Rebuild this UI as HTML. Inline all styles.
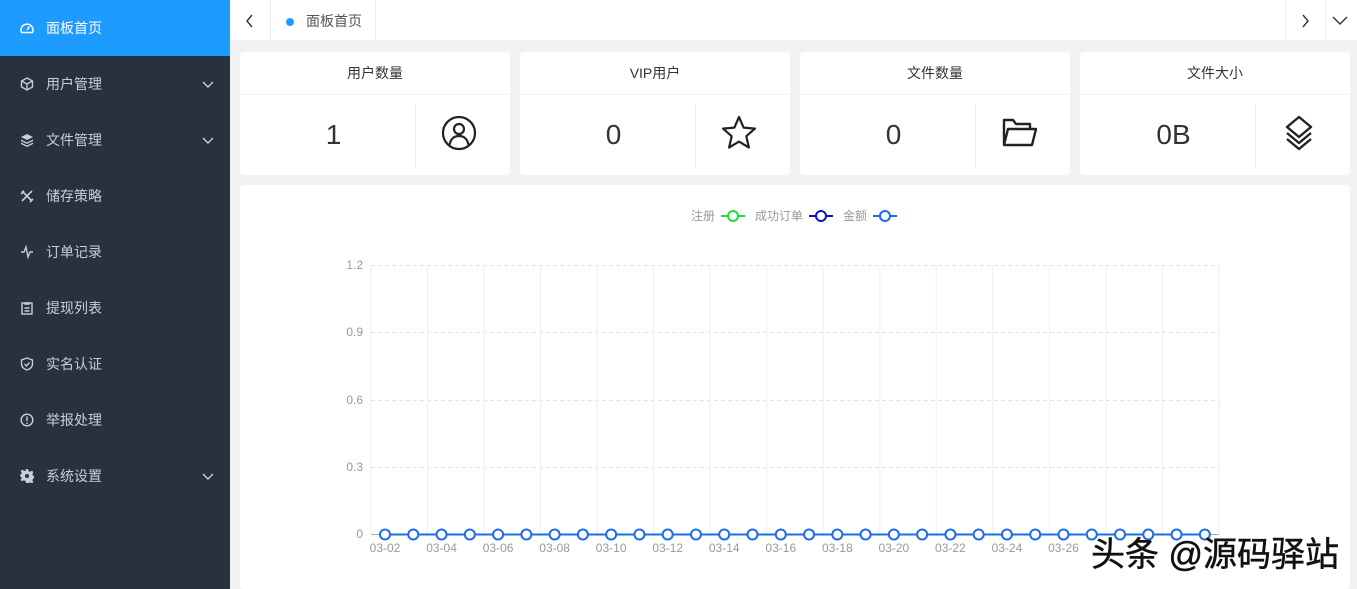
<!DOCTYPE html><html><head><meta charset="utf-8"><style>
*{box-sizing:border-box;margin:0;padding:0}
body{width:1357px;height:589px;overflow:hidden;background:#f2f2f2;font-family:"Liberation Sans","Noto Sans CJK SC",sans-serif;position:relative}
.side{position:absolute;left:0;top:0;width:230px;height:589px;background:#28323e}
.it{position:absolute;left:0;width:230px;height:56px;color:#c9ced4;font-size:14px;line-height:56px;padding-left:46px}
.it.on{background:#1e9bff;color:#fff}
.it svg.ic{position:absolute;left:20px;top:21px}
.it .ch{position:absolute;right:16px;top:22px}
.tabs{position:absolute;left:230px;top:0;width:1127px;height:41px;background:#fff;border-bottom:1px solid #eee}
.card{position:absolute;top:52px;width:270px;height:123px;background:#fff;border-radius:4px}
.card .h{height:43px;border-bottom:1px solid #f0f0f0;text-align:center;line-height:43px;font-size:14px;color:#333}
.card .n{position:absolute;left:0;width:187px;top:67px;text-align:center;font-size:28px;color:#333}
.card .d{position:absolute;left:175px;top:52px;height:64px;border-left:1px solid #eee}
.card svg{position:absolute;left:201px;top:63px}
.chart{position:absolute;left:240px;top:185px;width:1110px;height:404px;background:#fff;border-radius:4px}
</style></head><body>
<div class="side">
<div class="it on" style="top:0"><svg class="ic" width="14" height="14" viewBox="0 0 14 14" fill="none" stroke="#fff" stroke-width="1.5"><path d="M1.5 11.5A6 6 0 1 1 12.5 11.5Z"/><path d="M7 9L9.5 5.5"/></svg>面板首页</div>
<div class="it" style="top:56px"><svg class="ic" width="14" height="14" viewBox="0 0 14 14" fill="none" stroke="#c9ced4" stroke-width="1.4"><path d="M7 1L12.5 4v6L7 13 1.5 10V4z M1.5 4L7 7l5.5-3 M7 7v6"/></svg>用户管理<svg class="ch" width="12" height="12" viewBox="0 0 12 12" fill="none" stroke="#c9ced4" stroke-width="1.4"><path d="M1 4l5 5 5-5"/></svg></div>
<div class="it" style="top:112px"><svg class="ic" width="14" height="14" viewBox="0 0 14 14" fill="#c9ced4"><path d="M7 1l6 3-6 3-6-3z M1 6.5l6 3 6-3v1.5l-6 3-6-3z M1 9.5l6 3 6-3V11l-6 3-6-3z"/></svg>文件管理<svg class="ch" width="12" height="12" viewBox="0 0 12 12" fill="none" stroke="#c9ced4" stroke-width="1.4"><path d="M1 4l5 5 5-5"/></svg></div>
<div class="it" style="top:168px"><svg class="ic" width="14" height="14" viewBox="0 0 14 14" fill="none" stroke="#c9ced4" stroke-width="1.6"><path d="M2 2l10 10 M12 2L2 12 M1 5l3-3 M10 13l3-3"/></svg>储存策略</div>
<div class="it" style="top:224px"><svg class="ic" width="14" height="14" viewBox="0 0 14 14" fill="none" stroke="#c9ced4" stroke-width="1.4"><path d="M1 7h3l2-5 2 10 2-5h3"/></svg>订单记录</div>
<div class="it" style="top:280px"><svg class="ic" width="14" height="14" viewBox="0 0 14 14" fill="none" stroke="#c9ced4" stroke-width="1.4"><rect x="2" y="2" width="10" height="11"/><path d="M5 1v2h4V1 M4.5 7h5 M4.5 10h5"/></svg>提现列表</div>
<div class="it" style="top:336px"><svg class="ic" width="14" height="14" viewBox="0 0 14 14" fill="none" stroke="#c9ced4" stroke-width="1.4"><path d="M7 1l5.5 2v4c0 3-2.5 5-5.5 6C4 12 1.5 10 1.5 7V3z M4.5 7l2 2 3-3.5"/></svg>实名认证</div>
<div class="it" style="top:392px"><svg class="ic" width="14" height="14" viewBox="0 0 14 14" fill="none" stroke="#c9ced4" stroke-width="1.4"><circle cx="7" cy="7" r="5.8"/><path d="M7 3.5v4.5 M7 9.5v1.5"/></svg>举报处理</div>
<div class="it" style="top:448px"><svg class="ic" width="14" height="14" viewBox="0 0 14 14" fill="#c9ced4"><path d="M6 0h2l.5 2 1.7.8 1.8-1.1 1.4 1.4-1.1 1.8.8 1.7 2 .5v2l-2 .5-.8 1.7 1.1 1.8-1.4 1.4-1.8-1.1-1.7.8L8 14H6l-.5-2-1.7-.8-1.8 1.1-1.4-1.4 1.1-1.8-.8-1.7L-1 8V6l2-.5.8-1.7L.7 2l1.4-1.4 1.8 1.1L5.5 2z"/><circle cx="7" cy="7" r="2" fill="#28323e"/></svg>系统设置<svg class="ch" width="12" height="12" viewBox="0 0 12 12" fill="none" stroke="#c9ced4" stroke-width="1.4"><path d="M1 4l5 5 5-5"/></svg></div>
</div>
<div class="tabs">
<svg style="position:absolute;left:15px;top:14px" width="10" height="14" viewBox="0 0 10 14" fill="none" stroke="#333" stroke-width="1.4"><path d="M7 1L2 7l5 6"/></svg>
<div style="position:absolute;left:40px;top:0;height:41px;border-left:1px solid #eee"></div>
<div style="position:absolute;left:56px;top:18px;width:8px;height:8px;border-radius:50%;background:#1e9bff"></div>
<div style="position:absolute;left:76px;top:1px;line-height:41px;font-size:14px;color:#555">面板首页</div>
<div style="position:absolute;left:145px;top:0;height:41px;border-left:1px solid #eee"></div>
<div style="position:absolute;left:1055px;top:0;height:41px;border-left:1px solid #eee"></div>
<svg style="position:absolute;left:1070px;top:14px" width="10" height="14" viewBox="0 0 10 14" fill="none" stroke="#333" stroke-width="1.4"><path d="M3 1l5 6-5 6"/></svg>
<div style="position:absolute;left:1095px;top:0;height:41px;border-left:1px solid #eee"></div>
<svg style="position:absolute;left:1102px;top:14px" width="16" height="12" viewBox="0 0 16 12" fill="none" stroke="#333" stroke-width="1.4"><path d="M1 3l7 7 7-7"/></svg>
</div>
<div class="card" style="left:240px"><div class="h">用户数量</div><div class="n">1</div><div class="d"></div><svg width="36" height="36" viewBox="0 0 36 36" fill="none" stroke="#222" stroke-width="2.2"><circle cx="18" cy="18" r="16"/><circle cx="18" cy="14" r="5"/><path d="M8.5 30c1-6 4.5-9 9.5-9s8.5 3 9.5 9"/></svg></div>
<div class="card" style="left:520px"><div class="h">VIP用户</div><div class="n">0</div><div class="d"></div><svg width="36" height="36" viewBox="0 0 36 36" fill="none" stroke="#222" stroke-width="2.2" stroke-linejoin="round"><path d="M18 2l4.6 10.6 11.4 1-8.7 7.6 2.6 11.3L18 26.6 8.1 32.5l2.6-11.3L2 13.6l11.4-1z"/></svg></div>
<div class="card" style="left:800px"><div class="h">文件数量</div><div class="n">0</div><div class="d"></div><svg width="36" height="36" viewBox="0 0 36 36" fill="none" stroke="#222" stroke-width="2.4" stroke-linejoin="round"><path d="M3 30V5h9l3 4h14v5 M3 30l4-16h28l-4 16z"/></svg></div>
<div class="card" style="left:1080px"><div class="h">文件大小</div><div class="n">0B</div><div class="d"></div><svg width="36" height="36" viewBox="0 0 36 36" fill="none" stroke="#222" stroke-width="2.4" stroke-linejoin="round"><path d="M18 2l12 10-12 10L6 12z M6 18l12 10 12-10 M6 24l12 10 12-10"/></svg></div>
<div class="chart"></div>
<svg style="position:absolute;left:0;top:0" width="1357" height="589" font-family="Liberation Sans,Noto Sans CJK SC,sans-serif">
<g font-size="12" fill="#999">
<text x="691" y="220">注册</text><text x="755" y="220">成功订单</text><text x="843" y="220">金额</text></g>
<g fill="#fff" stroke-width="2"><path d="M721 216h24" stroke="#1fe03a"/><circle cx="733" cy="216" r="5" stroke="#1fe03a"/>
<path d="M809 216h24" stroke="#0d16b8"/><circle cx="821" cy="216" r="5" stroke="#0d16b8"/>
<path d="M873 216h24" stroke="#1a6ee6"/><circle cx="885" cy="216" r="5" stroke="#1a6ee6"/></g>
<g stroke="#e3e3e3" stroke-dasharray="4 3"><path d="M371 265.5H1219M371 332.5H1219M371 400.5H1219M371 467.5H1219"/></g>
<g stroke="#eee" id="vg"></g>
<g font-size="12" fill="#999" text-anchor="end"><text x="363" y="269">1.2</text><text x="363" y="336">0.9</text><text x="363" y="404">0.6</text><text x="363" y="471">0.3</text><text x="363" y="538">0</text></g>
<path d="M371 534.5H1219" stroke="#aaa"/>
<path d="M385 534.5H1205" stroke="#1a6ee6" stroke-width="2"/>
<g id="pts" fill="#fff" stroke="#1a6ee6" stroke-width="2"></g>
<g id="xl" font-size="12" fill="#999" text-anchor="middle"></g>
<text x="1091" y="566" font-size="34" fill="#111" stroke="#111" stroke-width="0.5" textLength="248" lengthAdjust="spacingAndGlyphs">头条 @源码驿站</text>
</svg>
<script>
var ns="http://www.w3.org/2000/svg",vg=document.getElementById("vg"),p=document.getElementById("pts"),xl=document.getElementById("xl");
for(var k=0;k<=15;k++){var x=371+k*56.53,l=document.createElementNS(ns,"path");l.setAttribute("d","M"+x.toFixed(1)+" 265V534");vg.appendChild(l);}
for(var i=0;i<30;i++){var x=385+i*28.27,c=document.createElementNS(ns,"circle");c.setAttribute("cx",x);c.setAttribute("cy",534.5);c.setAttribute("r",5);p.appendChild(c);
if(i%2==0&&i<26){var t=document.createElementNS(ns,"text");t.setAttribute("x",x);t.setAttribute("y",552);var d=i+2;t.textContent="03-"+(d<10?"0":"")+d;xl.appendChild(t);}}
</script>
</body></html>
